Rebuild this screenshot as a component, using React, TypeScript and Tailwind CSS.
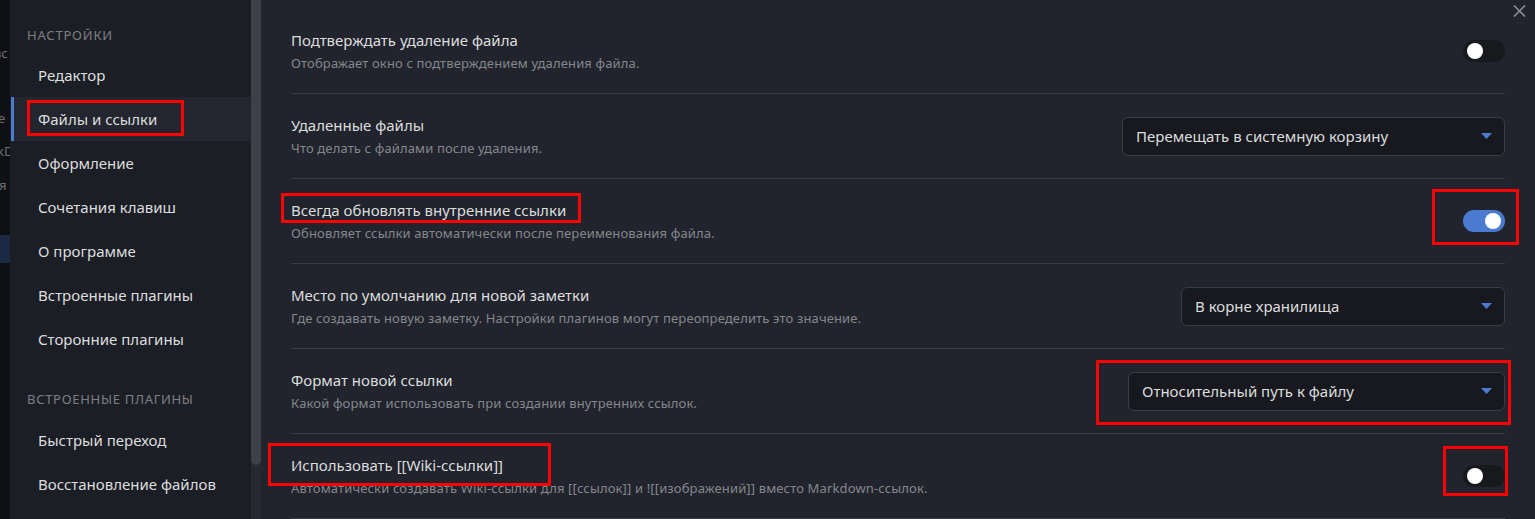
import React from 'react';

type Row = {
  title: string;
  desc: string;
  control: { kind: 'toggle'; on: boolean } | { kind: 'select'; value: string; width: string };
};

const rows: Row[] = [
  {
    title: 'Подтверждать удаление файла',
    desc: 'Отображает окно с подтверждением удаления файла.',
    control: { kind: 'toggle', on: false },
  },
  {
    title: 'Удаленные файлы',
    desc: 'Что делать с файлами после удаления.',
    control: { kind: 'select', value: 'Перемещать в системную корзину', width: 'w-[383px]' },
  },
  {
    title: 'Всегда обновлять внутренние ссылки',
    desc: 'Обновляет ссылки автоматически после переименования файла.',
    control: { kind: 'toggle', on: true },
  },
  {
    title: 'Место по умолчанию для новой заметки',
    desc: 'Где создавать новую заметку. Настройки плагинов могут переопределить это значение.',
    control: { kind: 'select', value: 'В корне хранилища', width: 'w-[324px]' },
  },
  {
    title: 'Формат новой ссылки',
    desc: 'Какой формат использовать при создании внутренних ссылок.',
    control: { kind: 'select', value: 'Относительный путь к файлу', width: 'w-[377px]' },
  },
  {
    title: 'Использовать [[Wiki-ссылки]]',
    desc: 'Автоматически создавать Wiki-ссылки для [[ссылок]] и ![[изображений]] вместо Markdown-ссылок.',
    control: { kind: 'toggle', on: false },
  },
];

const settingsNav = ['Редактор', 'Файлы и ссылки', 'Оформление', 'Сочетания клавиш', 'О программе', 'Встроенные плагины', 'Сторонние плагины'];
const pluginNav = ['Быстрый переход', 'Восстановление файлов'];

const Toggle = ({ on }: { on: boolean }) => (
  <div className={`flex h-[22px] w-[42px] items-center rounded-full px-[4px] ${on ? 'justify-end bg-[#4b7bd1]' : 'justify-start bg-[#17191d]'}`}>
    <div className="h-[16px] w-[16px] rounded-full bg-white" />
  </div>
);

const Select = ({ value, width }: { value: string; width: string }) => (
  <div className={`flex h-[39px] ${width} items-center justify-between rounded-[6px] border border-[#3a3d45] bg-[#17191e] pl-[13px] pr-[12px] text-[15px] text-[#dcddde]`}>
    <span>{value}</span>
    <svg width="11" height="6" viewBox="0 0 11 6">
      <path d="M0 0 L11 0 L5.5 6 Z" fill="#4b7bd1" />
    </svg>
  </div>
);

const RedBox = ({ className }: { className: string }) => (
  <div className={`pointer-events-none absolute border-[3px] border-[#ff0000] ${className}`} />
);

export default function App() {
  return (
    <div className="relative flex h-[519px] w-[1535px] overflow-hidden bg-[#21242c] font-['Noto_Sans',sans-serif]">
      {/* edge of the window underneath */}
      <div className="flex w-[10px] shrink-0 flex-col overflow-hidden bg-[#0e1014] text-[13px] leading-[18px] text-[#6f7175]">
        <span className="-ml-[6px] mt-[44px] whitespace-nowrap">вс</span>
        <span className="-ml-[2px] mt-[47px] whitespace-nowrap">е</span>
        <span className="-ml-[3px] mt-[15px] whitespace-nowrap">kD</span>
        <span className="-ml-[1px] mt-[16px] whitespace-nowrap">я с</span>
        <div className="mt-[41px] h-[28px] bg-[#1c2944]" />
      </div>

      {/* sidebar */}
      <aside className="w-[241px] shrink-0 bg-[#1c1e25] text-[15px] text-[#dcddde]">
        <div className="pb-[9px] pl-[17px] pt-[26px] text-[13px] leading-[18px] tracking-[0.8px] text-[#7d7f84]">НАСТРОЙКИ</div>
        {settingsNav.map((item) =>
          item === 'Файлы и ссылки' ? (
            <div key={item} className="ml-[1px] flex h-[44px] items-center border-l-[3px] border-[#4b7bd1] bg-[#23262e] pl-[24px]">
              {item}
            </div>
          ) : (
            <div key={item} className="flex h-[44px] items-center pl-[28px]">
              {item}
            </div>
          )
        )}
        <div className="pb-[10px] pl-[17px] pt-[29px] text-[13px] leading-[18px] tracking-[0.7px] text-[#7d7f84]">ВСТРОЕННЫЕ ПЛАГИНЫ</div>
        {pluginNav.map((item) => (
          <div key={item} className="flex h-[44px] items-center pl-[28px]">
            {item}
          </div>
        ))}
      </aside>

      {/* scrollbar */}
      <div className="w-[10px] shrink-0 bg-[#262930]">
        <div className="h-[465px] rounded-b-full bg-[#3d4046]" />
      </div>

      {/* content */}
      <main className="relative flex-1 px-[30px] pt-[9px]">
        <svg className="absolute right-[9px] top-[5px]" width="13" height="12" viewBox="0 0 13 12">
          <path d="M1 0.5 L12 11.5 M12 0.5 L1 11.5" stroke="#8e9095" strokeWidth="1.6" />
        </svg>
        {rows.map((row) => (
          <div key={row.title} className="flex h-[85px] items-center justify-between border-b border-[#383b43]">
            <div>
              <div className="text-[15px] leading-[20px] text-[#dcddde]">{row.title}</div>
              <div className="mt-[4px] text-[13px] leading-[18px] tracking-[0.14px] text-[#85878c]">{row.desc}</div>
            </div>
            {row.control.kind === 'toggle' ? (
              <Toggle on={row.control.on} />
            ) : (
              <Select value={row.control.value} width={row.control.width} />
            )}
          </div>
        ))}
      </main>

      {/* annotation boxes */}
      <RedBox className="left-[27px] top-[100px] h-[36px] w-[157px]" />
      <RedBox className="left-[281px] top-[193px] h-[30px] w-[300px]" />
      <RedBox className="left-[1432px] top-[189px] h-[56px] w-[87px]" />
      <RedBox className="left-[1096px] top-[360px] h-[65px] w-[415px]" />
      <RedBox className="left-[268px] top-[443px] h-[43px] w-[283px]" />
      <RedBox className="left-[1443px] top-[446px] h-[50px] w-[65px]" />
    </div>
  );
}
